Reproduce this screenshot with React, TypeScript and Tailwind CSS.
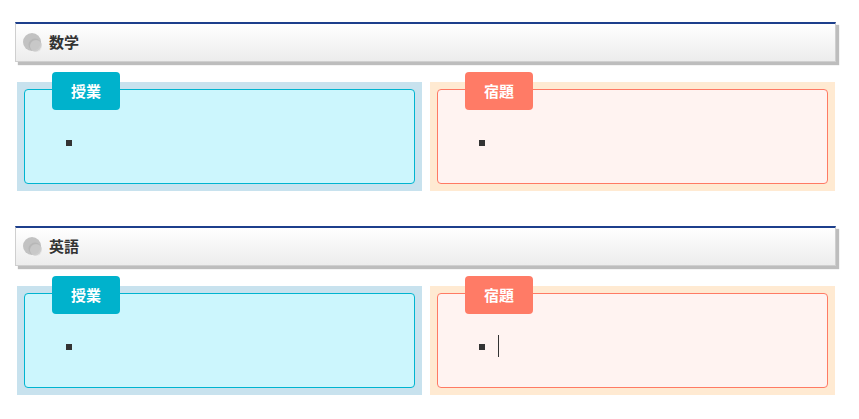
import React from "react";

const subjects = [
  { name: "数学", caret: false },
  { name: "英語", caret: true },
];

function HeaderIcon() {
  return (
    <svg width="20" height="20" viewBox="0 0 20 20" className="shrink-0">
      <circle cx="9" cy="9" r="9" fill="#c2c2c2" />
      <circle cx="12" cy="12" r="6.5" fill="#b4b4b4" opacity="0.8" />
      <circle cx="13" cy="13" r="6" fill="#dadada" opacity="0.5" />
    </svg>
  );
}

function Panel({ label, kind, caret }: { label: string; kind: "class" | "homework"; caret?: boolean }) {
  const blue = kind === "class";
  return (
    <div className={`relative flex-1 p-[7px] ${blue ? "bg-[#c8e2ee]" : "bg-[#ffead2]"}`}>
      <div
        className={`h-[95px] rounded-[4px] border border-solid ${
          blue ? "border-[#00b4d0] bg-[#ccf6fd]" : "border-[#ff7a64] bg-[#fff3f1]"
        }`}
      >
        <ul className="list-[square] pl-[59px] pt-[41px] text-[15px] text-[#333] marker:text-[#333]">
          <li className="h-[22px] leading-[22px]">
            {caret && <span className="ml-[1px] inline-block h-[22px] w-px bg-[#333] align-top" />}
          </li>
        </ul>
      </div>
      <div
        className={`absolute top-[-10px] left-[35px] flex h-[38px] w-[68px] items-center justify-center rounded-[4px] text-[15px] font-bold text-white ${
          blue ? "bg-[#00b2cc]" : "bg-[#ff7b66]"
        }`}
      >
        {label}
      </div>
    </div>
  );
}

export default function App() {
  return (
    <div
      className="min-h-screen bg-white pt-[22px] pl-[15px] pr-[23px]"
      style={{ fontFamily: '"Noto Sans CJK JP", "Noto Sans", sans-serif' }}
    >
      {subjects.map((s) => (
        <div key={s.name} className="mb-[35px]">
          {/* section header */}
          <div className="flex h-[40px] items-center gap-[6px] border border-t-2 border-[#cfcfcf] border-t-[#1d3f8c] bg-gradient-to-b from-white to-[#ececec] pl-[7px] shadow-[3px_3px_1px_#bdbdbd]">
            <HeaderIcon />
            <span className="text-[15px] font-semibold text-[#333]">{s.name}</span>
          </div>

          {/* panels */}
          <div className="mt-[20px] flex gap-[8px] pl-[2px] pr-[1px]">
            <Panel label="授業" kind="class" />
            <Panel label="宿題" kind="homework" caret={s.caret} />
          </div>
        </div>
      ))}
    </div>
  );
}
